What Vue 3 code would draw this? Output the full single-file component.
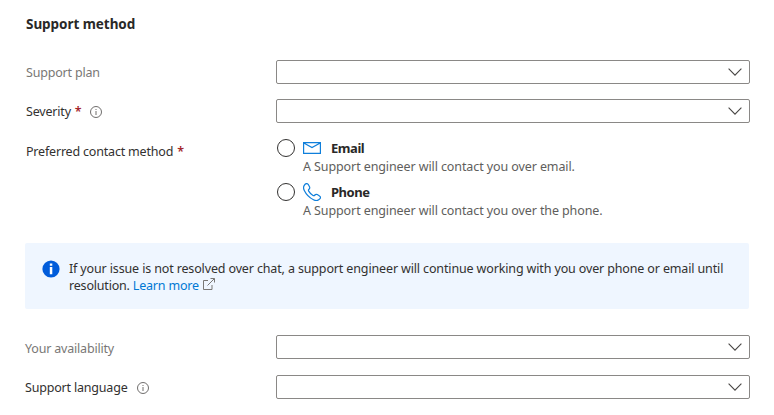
<script setup>
const methods = [
  { id: 'email', title: 'Email', text: 'A Support engineer will contact you over email.' },
  { id: 'phone', title: 'Phone', text: 'A Support engineer will contact you over the phone.' },
]
</script>

<template>
  <main class="form">
    <h2 class="heading">Support method</h2>

    <div class="row">
      <div class="label muted">Support plan</div>
      <div class="select">
        <svg class="chevron" viewBox="0 0 14 8"><path d="M0.6 0.7 7 7.1 13.4 0.7" /></svg>
      </div>
    </div>

    <div class="row severity-row">
      <div class="label"><span>Severity</span><span class="star">*</span>
        <svg class="info" viewBox="0 0 12 12"><circle cx="6" cy="6" r="5.5" /><path d="M6 5v4M6 3v1" /></svg>
      </div>
      <div class="select">
        <svg class="chevron" viewBox="0 0 14 8"><path d="M0.6 0.7 7 7.1 13.4 0.7" /></svg>
      </div>
    </div>

    <div class="row contact-row">
      <div class="label"><span>Preferred contact method</span><span class="star">*</span></div>
      <div class="options">
        <div v-for="m in methods" :key="m.id" class="option">
          <span class="radio"></span>
          <div>
            <div class="option-head">
              <svg v-if="m.id === 'email'" class="method-icon" viewBox="0 0 18 18">
                <path d="M0.6 3.6h16.8v10.8H0.6zM0.8 4 9 8.6 17.2 4" />
              </svg>
              <svg v-else class="method-icon" viewBox="0 0 18 18">
                <path d="M2.1 1.2C3.2 0.2 4.6 0.4 5.3 1.5L6.5 3.7C7 4.7 6.8 5.5 6 6.2C5.3 6.8 5.2 7.3 5.7 8.1C6.8 10 8.2 11.4 10 12.4C10.8 12.9 11.3 12.7 11.9 12C12.6 11.2 13.4 11.1 14.3 11.6L16.5 12.9C17.7 13.6 17.8 14.9 16.8 15.9C15.2 17.7 12.9 18 10.5 16.8C6.2 14.6 3.3 11.7 1.3 7.5C0.1 5 0.4 2.8 2.1 1.2Z" />
              </svg>
              <span class="option-title">{{ m.title }}</span>
            </div>
            <div class="option-text">{{ m.text }}</div>
          </div>
        </div>
      </div>
    </div>

    <section class="banner">
      <svg class="banner-icon" viewBox="0 0 18 18">
        <circle cx="9" cy="9" r="8.6" />
        <path d="M7.8 3.4h2.5v2.3H7.8zM7.8 7h2.5v7.3H7.8z" />
      </svg>
      <p class="banner-text">
        <span class="line">If your issue is not resolved over chat, a support engineer will continue working with you over phone or email until</span>
        <br />resolution. <a class="link">Learn more</a>
        <svg class="external" viewBox="0 0 12 12"><path d="M5 2.5H0.5v9h8.5V7M4.5 7.5 11.3 0.7M7.5 0.5h4v4" /></svg>
      </p>
    </section>

    <div class="row">
      <div class="label muted late availability">Your availability</div>
      <div class="select">
        <svg class="chevron" viewBox="0 0 14 8"><path d="M0.6 0.7 7 7.1 13.4 0.7" /></svg>
      </div>
    </div>

    <div class="row language-row">
      <div class="label late"><span>Support language</span>
        <svg class="info" viewBox="0 0 12 12"><circle cx="6" cy="6" r="5.5" /><path d="M6 5v4M6 3v1" /></svg>
      </div>
      <div class="select">
        <svg class="chevron" viewBox="0 0 14 8"><path d="M0.6 0.7 7 7.1 13.4 0.7" /></svg>
      </div>
    </div>
  </main>
</template>

<style>
body {
  background: #fff;
}
</style>

<style scoped>
.form {
  box-sizing: border-box;
  width: 774px;
  height: 415px;
  padding: 14px 24px 0 25px;
  overflow: hidden;
  color: #323130;
  font-family: "Segoe UI", "Noto Sans", sans-serif;
  font-size: 12.5px;
  letter-spacing: -0.19px;
  line-height: 18px;
  white-space: nowrap;
}
.heading {
  margin: 0 0 26px 1px;
  font-size: 13.5px;
  line-height: 20px;
  font-weight: 700;
  letter-spacing: -0.05px;
  color: #292827;
}
.row {
  display: flex;
}
.label {
  display: flex;
  align-items: center;
  width: 250px;
  height: 24px;
  padding: 2px 0 0 1px;
  box-sizing: border-box;
  flex: none;
  margin-right: 1px;
}
.label.late {
  padding-left: 0;
}
.label.availability {
  padding-top: 4px;
}
.muted {
  color: #797775;
}
.star {
  margin-left: 4px;
  color: #a4262c;
  font-weight: 600;
}
.info {
  width: 12px;
  height: 12px;
  margin: 0 0 1px 9px;
  fill: none;
  stroke: #605e5c;
  stroke-width: 0.9;
}
.select {
  display: flex;
  align-items: center;
  justify-content: flex-end;
  box-sizing: border-box;
  width: 474px;
  height: 24px;
  padding-right: 7px;
  border: 1px solid #8a8886;
  border-radius: 2px;
  flex: none;
}
.chevron {
  width: 14px;
  height: 8px;
  fill: none;
  stroke: #484644;
  stroke-width: 1.1;
}
.severity-row {
  margin-top: 15px;
}
.contact-row {
  margin-top: 16px;
}
.options {
  display: flex;
  flex-direction: column;
}
.option {
  display: flex;
  height: 44px;
}
.radio {
  box-sizing: border-box;
  width: 18px;
  height: 18px;
  margin: 0 8px 0 1px;
  border: 1px solid #323130;
  border-radius: 50%;
}
.option-head {
  display: flex;
  align-items: center;
  height: 18px;
}
.method-icon {
  width: 18px;
  height: 18px;
  margin-right: 10px;
  fill: none;
  stroke: #0f7fdb;
  stroke-width: 1.2;
}
.option-title {
  font-size: 13px;
  font-weight: 700;
  color: #292827;
  letter-spacing: -0.45px;
}
.option-text {
  padding-top: 1px;
  color: #605e5c;
  letter-spacing: -0.1px;
}
.banner {
  display: flex;
  box-sizing: border-box;
  width: 724px;
  height: 66px;
  margin: 16px 0 26px;
  padding: 17px 0 0 17px;
  background: #eff6ff;
  border-radius: 2px;
}
.banner-icon {
  width: 18px;
  height: 18px;
  margin-right: 9px;
  fill: #015cda;
}
.banner-icon path {
  fill: #fff;
}
.banner-text {
  margin: 0;
  line-height: 17px;
}
.line {
  letter-spacing: -0.14px;
}
.link {
  color: #0078d4;
}
.external {
  width: 12px;
  height: 12px;
  margin-left: 4px;
  fill: none;
  stroke: #797775;
  stroke-width: 1;
}
.language-row {
  margin-top: 16px;
}
</style>
